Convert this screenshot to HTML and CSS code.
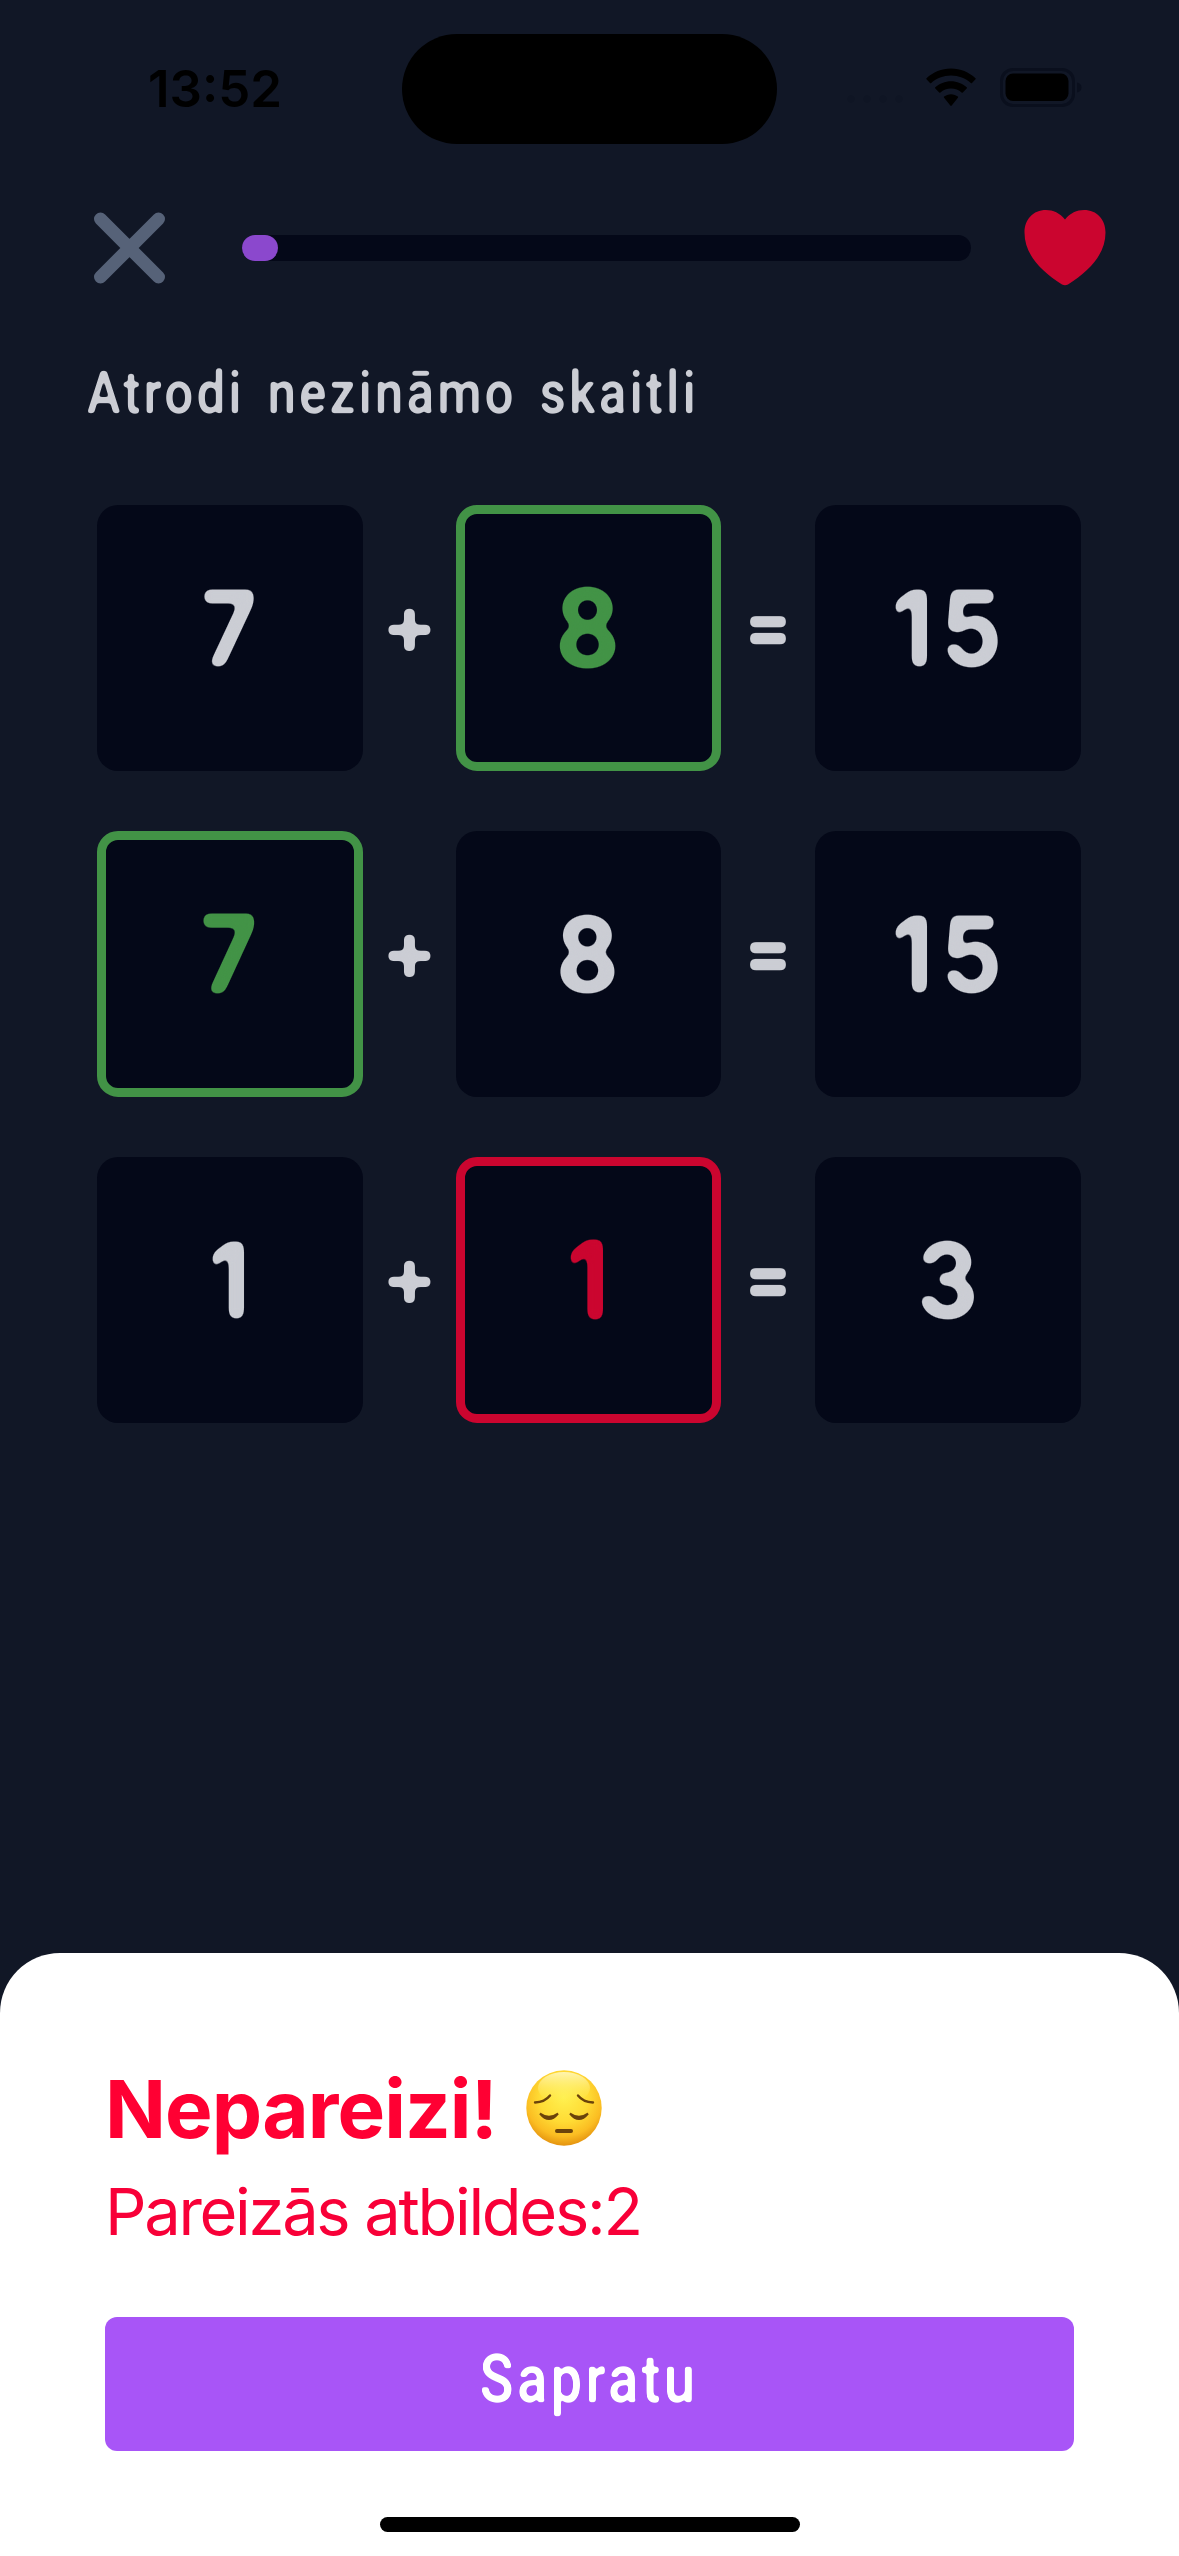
FILE: index.html
```html
<!DOCTYPE html>
<html lang="lv">
<head>
<meta charset="utf-8">
<title>Atrodi nezināmo skaitli</title>
<link rel="stylesheet" href="styles.css">
</head>
<body>
<svg class="defs" width="0" height="0" aria-hidden="true">
  <defs>
    <filter id="round-lg" color-interpolation-filters="sRGB"><feGaussianBlur stdDeviation="4"/><feColorMatrix values="1 0 0 0 0 0 1 0 0 0 0 0 1 0 0 0 0 0 9 -3.600"/></filter>
    <filter id="round-md" color-interpolation-filters="sRGB"><feGaussianBlur stdDeviation="2.5"/><feColorMatrix values="1 0 0 0 0 0 1 0 0 0 0 0 1 0 0 0 0 0 7 -2.7"/></filter>
    <filter id="round-sm" color-interpolation-filters="sRGB"><feGaussianBlur stdDeviation="1.5"/><feColorMatrix values="1 0 0 0 0 0 1 0 0 0 0 0 1 0 0 0 0 0 4 -1.3"/></filter>
  </defs>
</svg>
<div class="screen">
  <header class="status">
    <div class="status-time">13:52</div>
    <div class="island"></div>
    <div class="status-icons">
      <svg class="signal" width="60" height="8" viewBox="0 0 60 8"><circle cx="6" cy="4" r="3.500"/><circle cx="22" cy="4" r="3.500"/><circle cx="38" cy="4" r="3.500"/><circle cx="54" cy="4" r="3.500"/></svg>
      <svg class="wifi" width="50" height="39" viewBox="0 0 50 39"><path d="M25 0.500C34.500 0.500 43 4.200 49.500 10.200Q50 10.700 49.500 11.300L46 15Q45.400 15.500 44.800 15C39.500 10.300 32.700 7.500 25 7.500S10.500 10.300 5.200 15Q4.600 15.500 4 15L0.500 11.300Q0 10.700 0.500 10.200C7 4.200 15.500 0.500 25 0.500Z"/><path d="M25 13.200C31 13.200 36.500 15.500 40.700 19.300Q41.300 19.900 40.700 20.500L36.800 24.500Q36.200 25 35.600 24.500C32.800 22.100 29.100 20.600 25 20.600S17.200 22.100 14.400 24.500Q13.800 25 13.200 24.500L9.300 20.500Q8.700 19.900 9.300 19.300C13.500 15.500 19 13.200 25 13.200Z"/><path d="M25 26.200C27.600 26.200 30 27.100 31.900 28.600Q32.500 29.200 31.900 29.800L25.700 37.600Q25 38.200 24.300 37.600L18.100 29.800Q17.500 29.200 18.100 28.600C20 27.100 22.400 26.200 25 26.200Z"/></svg>
      <svg class="battery" width="82" height="39" viewBox="0 0 82 39"><rect class="battery-shell" x="1.500" y="1.500" width="72" height="36" rx="11.500"/><rect x="5.500" y="5.500" width="63" height="27.500" rx="7.500"/><path class="battery-nub" d="M77 14.500Q81.500 15.500 81.500 19.500Q81.500 23.500 77 24.500Z"/></svg>
    </div>
  </header>

  <main class="quiz">
    <div class="topbar">
      <svg class="close" width="72" height="72" viewBox="0 0 72 72"><path d="M7.500 7L65.500 65M65.500 7L7.500 65"/></svg>
      <div class="track"><div class="fill" style="width:5%"></div></div>
      <svg class="heart" width="82" height="76" viewBox="0 0 82 76"><path d="M41 9.500C36 3 29 0 22 0C9 0 0.500 9.500 0.500 22.500C0.500 43 15 60 38 74.500Q41 76 44 74.500C67 60 81.500 43 81.500 22.500C81.500 9.500 73 0 60 0C53 0 46 3 41 9.500Z"/></svg>
    </div>
    <h1 class="title"><span class="narrow">Atrodi nezināmo skaitli</span></h1>
    <div class="equations">
      <div class="card"><span>7</span></div><div class="op">+</div><div class="card right"><span>8</span></div><div class="op eq">=</div><div class="card"><span>15</span></div>
      <div class="card right"><span>7</span></div><div class="op">+</div><div class="card"><span>8</span></div><div class="op eq">=</div><div class="card"><span>15</span></div>
      <div class="card"><span>1</span></div><div class="op">+</div><div class="card wrong"><span>1</span></div><div class="op eq">=</div><div class="card"><span>3</span></div>
    </div>
  </main>

  <section class="sheet">
    <h2 class="result"><span>Nepareizi!</span>
      <svg class="emoji" width="76" height="76" viewBox="0 0 76 76">
        <defs>
          <radialGradient id="face" cx="50%" cy="36%" r="64%"><stop offset="0" stop-color="#fff04f"/><stop offset=".5" stop-color="#ffdc35"/><stop offset=".8" stop-color="#fbbd22"/><stop offset="1" stop-color="#e4930f"/></radialGradient>
          <linearGradient id="shine" x1="0" y1="0" x2="0" y2="1"><stop offset="0" stop-color="#fffbd0" stop-opacity=".8"/><stop offset="1" stop-color="#fff04f" stop-opacity="0"/></linearGradient>
        </defs>
        <circle cx="38" cy="38" r="37.700" fill="url(#face)"/>
        <ellipse cx="38" cy="18" rx="26" ry="16" fill="url(#shine)"/>
        <g fill="none" stroke="#6b430b" stroke-linecap="round">
          <path stroke-width="2.400" d="M9 32.500Q19 32 24 25.500M67 32.500Q57 32 52 25.500"/>
          <path stroke-width="2" fill="#6b430b" d="M14 43.500Q23 50 32 43.500Q23 54.500 14 43.500ZM44 43.500Q53 50 62 43.500Q53 54.500 44 43.500Z"/>
          <path stroke-width="4" d="M31 61H45"/>
        </g>
      </svg>
    </h2>
    <p class="answer">Pareizās atbildes:2</p>
    <button class="confirm"><span class="narrow">Sapratu</span></button>
    <div class="home"></div>
  </section>
</div>
</body>
</html>
```
FILE: styles.css
```css
* { box-sizing: border-box; margin: 0; }
body { background: #111726; font-family: Inter, "Liberation Sans", sans-serif; }
.defs { display: block; }
.screen { width: 1179px; height: 2556px; display: flex; flex-direction: column; overflow: hidden; }

.status { height: 178px; padding: 34px 97px 34px 0; display: grid; grid-template-columns: 402px 375px 1fr; }
.status-time { padding-left: 148px; font-size: 51px; font-weight: 600; line-height: 109px; color: #000; }
.island { background: #000; border-radius: 55px; }
.status-icons { display: flex; justify-content: flex-end; align-items: center; padding-bottom: 4px; }
.signal { margin: 24px 21px 0 0; fill: #0f1524; }
.wifi { margin-right: 24px; }
.battery-shell { fill: none; stroke: #0a0f1d; stroke-width: 3; }
.battery-nub { fill: #0a0f1d; }

.quiz { flex: 1; }
.topbar { margin-top: 32px; height: 76px; padding: 0 73px 0 93px; display: flex; align-items: center; }
.close { fill: none; stroke: #566278; stroke-width: 13; stroke-linecap: round; }
.track { flex: 1; height: 26px; margin: 0 53px 0 77px; background: #040818; border-radius: 13px; }
.fill { height: 26px; background: #8b48cd; border-radius: 13px; }
.heart { fill: #cb052f; }

.title { margin: 62px 0 0 87px; height: 90px; line-height: 90px; font-family: Roboto, sans-serif; font-size: 60px; font-weight: 500; color: #cbcdd4; letter-spacing: 4.2px; word-spacing: 8px; filter: url(#round-sm); }
.narrow { display: inline-block; transform: scaleX(.84); transform-origin: left; white-space: nowrap; }

.equations { margin: 67px 98px 0 97px; display: grid; grid-template-columns: 266px 93px 265px 94px 266px; grid-auto-rows: 266px; row-gap: 60px; }
.card { background: #040818; border-radius: 21px; padding: 0 0 22px 5px; display: flex; align-items: center; justify-content: center; font-size: 105px; font-weight: 700; color: #cbcdd4; }
.card span { transform: scaleX(.92); letter-spacing: 8px; filter: url(#round-lg); }
.right, .wrong { border: 9px solid; font-size: 108px; }
.right { color: #429346; }
.wrong { color: #cb052f; }
.op { align-self: center; padding-bottom: 28px; text-align: center; font-size: 83px; font-weight: 700; color: #cbcdd4; filter: url(#round-md); }
.eq { font-size: 67px; font-weight: 900; padding-bottom: 25px; }

.sheet { height: 603px; background: #fff; border-radius: 60px 60px 0 0; padding: 107px 105px 0; display: flex; flex-direction: column; }
.result { display: flex; align-items: center; gap: 29px; height: 96px; font-size: 80px; font-weight: 700; letter-spacing: -.9px; color: #ff0033; }
.answer { margin-top: 16px; height: 80px; line-height: 80px; font-size: 65px; letter-spacing: -2.3px; color: #f80038; }
.confirm { margin-top: 65px; height: 134px; border: 0; border-radius: 12px; background: #a855f7; color: #fff; font-family: Roboto, sans-serif; font-size: 66px; font-weight: 500; letter-spacing: 4.5px; line-height: 120px; padding: 0 0 9px; }
.confirm .narrow { transform-origin: center; filter: url(#round-sm); }
.home { width: 420px; height: 15px; margin: 66px auto 0; border-radius: 8px; background: #000; }
```
